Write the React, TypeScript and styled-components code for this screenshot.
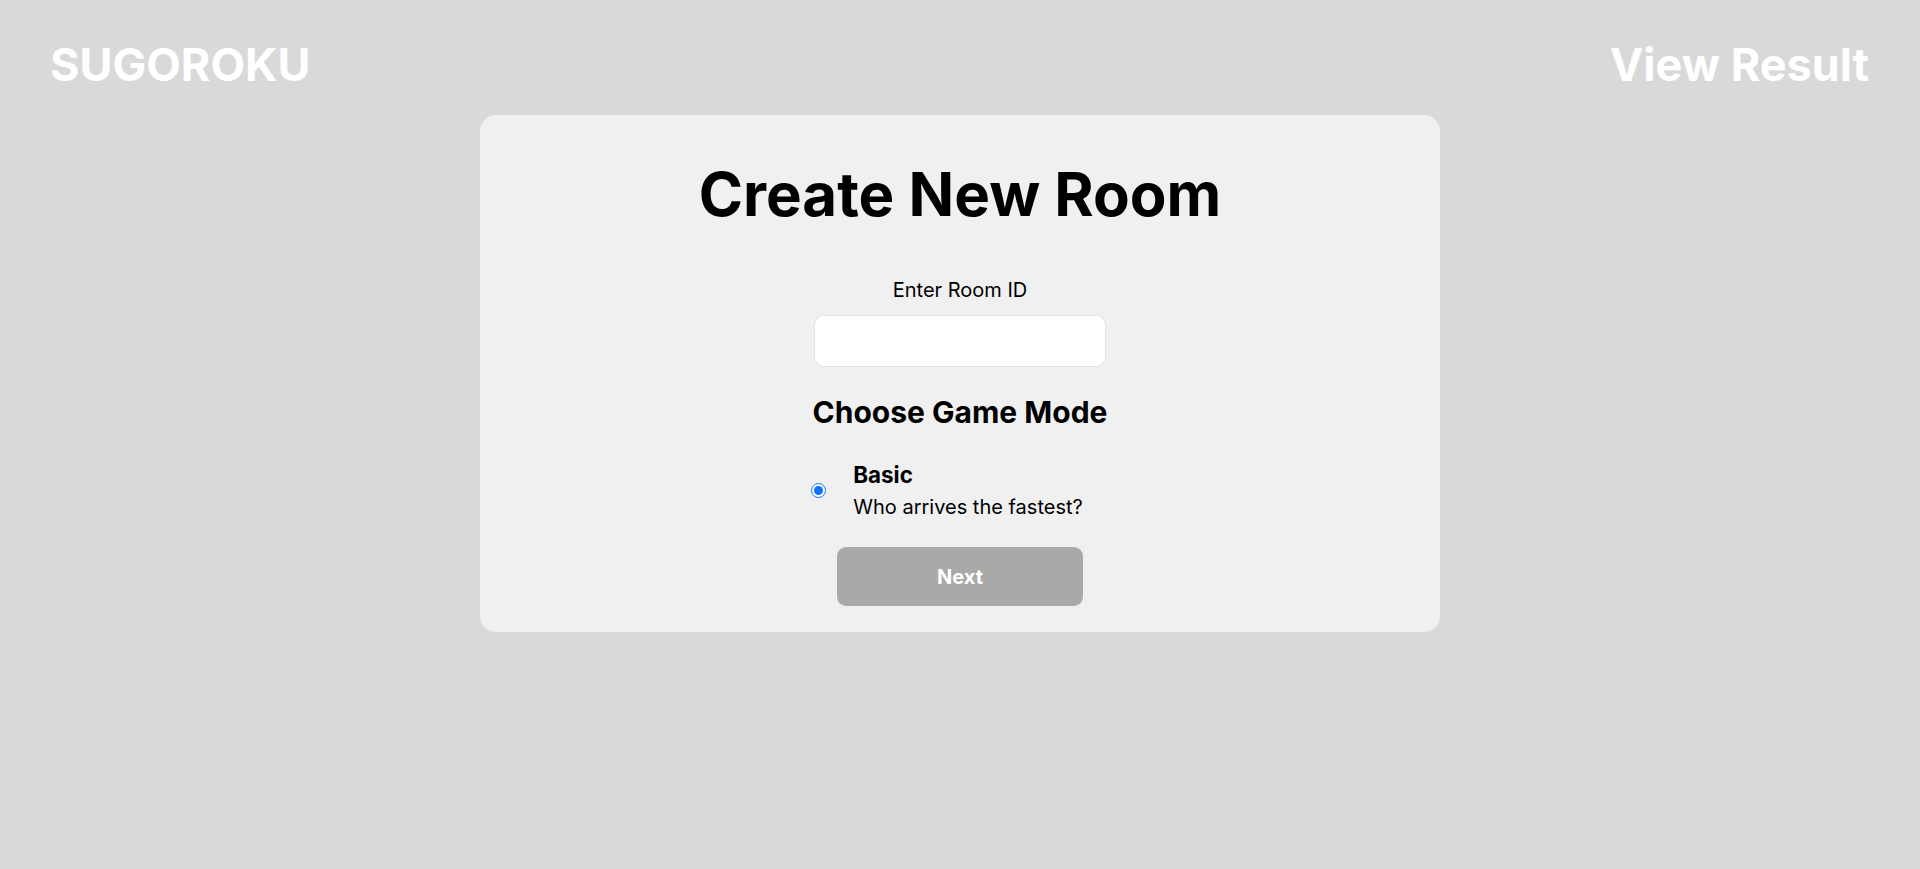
import React, { useState } from 'react'
import styled, { createGlobalStyle } from 'styled-components'

const GlobalStyle = createGlobalStyle`
    body {
        margin: 0;
        background-color: #d9d9d9;
        font-family: Inter, "Noto Sans", sans-serif;
    }
`

const Page = styled.div`
    min-height: 100vh;
    display: flex;
    flex-direction: column;
    align-items: center;
`

const Header = styled.header`
    width: 100%;
    box-sizing: border-box;
    display: flex;
    justify-content: space-between;
    align-items: center;
    padding: 37px 51px 0 50px;
`

const HeaderLink = styled.a`
    color: #ffffff;
    font-size: 45px;
    font-weight: 700;
    text-decoration: none;
    cursor: pointer;
`

const Card = styled.main`
    width: 960px;
    box-sizing: border-box;
    margin-top: 23px;
    padding: 43px 0 26px;
    background-color: #f0f0f0;
    border-radius: 16px;
    display: flex;
    flex-direction: column;
    align-items: center;
`

const Title = styled.h1`
    margin: 0;
    font-size: 60px;
    font-weight: 700;
    color: #000;
`

const Label = styled.label`
    margin-top: 48px;
    font-size: 20px;
    color: #000;
`

const Input = styled.input`
    margin-top: 13px;
    width: 292px;
    height: 52px;
    box-sizing: border-box;
    border: 1px solid #e3e3e3;
    border-radius: 10px;
    background: #fff;
    font-family: inherit;
    font-size: 18px;
    padding: 0 12px;
    outline: none;
`

const SectionTitle = styled.h2`
    margin: 27px 0 0;
    font-size: 30px;
    font-weight: 700;
    color: #000;
`

const ModeOption = styled.label`
    margin-top: 31px;
    padding-right: 26px;
    display: flex;
    align-items: center;
    gap: 27px;
    cursor: pointer;
`

const Radio = styled.input`
    margin: 0;
    width: 15px;
    height: 15px;
    accent-color: #0a74ff;
`

const ModeText = styled.div`
    display: flex;
    flex-direction: column;
    gap: 7px;
`

const ModeName = styled.span`
    font-size: 22.4px;
    font-weight: 700;
    color: #000;
`

const ModeDesc = styled.span`
    font-size: 20px;
    color: #000;
`

const NextButton = styled.button`
    margin-top: 28px;
    width: 246px;
    height: 59px;
    border: none;
    border-radius: 9px;
    background-color: #aaa9a7;
    color: #fff;
    font-family: inherit;
    font-size: 20px;
    font-weight: 700;
    cursor: pointer;
`

export default function App() {
    const [roomId, setRoomId] = useState('')
    const [mode, setMode] = useState('basic')

    return (
        <>
            <GlobalStyle />
            <Page>
                <Header>
                    <HeaderLink>SUGOROKU</HeaderLink>
                    <HeaderLink>View Result</HeaderLink>
                </Header>
                <Card>
                    <Title>Create New Room</Title>
                    <Label htmlFor="room-id">Enter Room ID</Label>
                    <Input id="room-id" value={roomId} onChange={e => setRoomId(e.target.value)} />
                    <SectionTitle>Choose Game Mode</SectionTitle>
                    <ModeOption>
                        <Radio type="radio" name="mode" checked={mode === 'basic'} onChange={() => setMode('basic')} />
                        <ModeText>
                            <ModeName>Basic</ModeName>
                            <ModeDesc>Who arrives the fastest?</ModeDesc>
                        </ModeText>
                    </ModeOption>
                    <NextButton>Next</NextButton>
                </Card>
            </Page>
        </>
    )
}
